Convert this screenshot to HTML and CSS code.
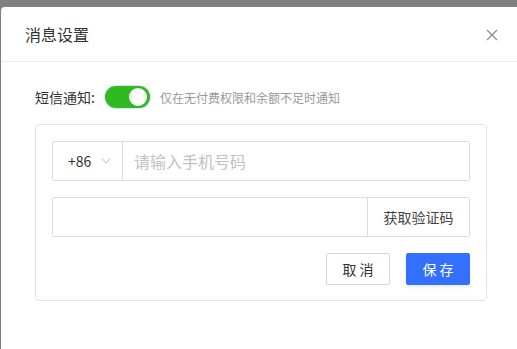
FILE: index.html
```html
<!DOCTYPE html>
<html lang="zh-CN">
<head>
<meta charset="UTF-8" />
<meta name="viewport" content="width=device-width, initial-scale=1" />
<title>消息设置</title>
<link rel="stylesheet" href="styles.css">
</head>
<body>

<div class="modal">
  <div class="modal-header">
    <h2>消息设置</h2>
    <span class="close">
      <svg width="12" height="12" viewBox="0 0 12 12"><path d="M1 1 L11 11 M11 1 L1 11" stroke="#8c8c8c" stroke-width="1.3" fill="none"/></svg>
    </span>
  </div>

  <div class="modal-body">
    <div class="notify-row">
      <span class="label">短信通知:</span>
      <span class="switch on"><span class="knob"></span></span>
      <span class="hint">仅在无付费权限和余额不足时通知</span>
    </div>

    <div class="card">
      <div class="field">
        <div class="prefix">
          <span>+86</span>
          <svg width="10" height="6" viewBox="0 0 10 6"><path d="M1 0.5 L5 5 L9 0.5" stroke="#bfbfbf" stroke-width="1" fill="none"/></svg>
        </div>
        <input type="text" class="phone" placeholder="请输入手机号码" />
      </div>

      <div class="field">
        <input type="text" class="code" />
        <button class="get-code">获取验证码</button>
      </div>

      <div class="actions">
        <button class="btn">取 消</button>
        <button class="btn primary">保 存</button>
      </div>
    </div>
  </div>
</div>

</body>
</html>
```

FILE: styles.css
```css
body {
  margin: 0;
  background: #808080;
  font-family: "Noto Sans CJK SC", "Noto Sans", sans-serif;
  color: #333;
  overflow: hidden;
  height: 349px;
}
.modal {
  margin: 7px 0 0 1px;
  width: 540px;
  height: 342px;
  background: #fff;
  border-radius: 4px 0 0 0;
}
.modal-header {
  height: 54px;
  display: flex;
  align-items: center;
  justify-content: space-between;
  padding: 0 43px 0 24px;
  border-bottom: 1px solid #ebebeb;
}
.modal-header h2 {
  margin: 0;
  font-size: 16px;
  font-weight: 400;
  color: #333;
}
.close {
  display: flex;
  margin-top: 2px;
}
.modal-body {
  padding: 24px 0 0 34px;
}
.notify-row {
  display: flex;
  align-items: center;
  height: 22px;
}
.label {
  font-size: 14px;
  color: #333;
  margin-right: 10px;
}
.switch {
  width: 45px;
  height: 22px;
  border-radius: 11px;
  background: #2fbb1f;
  box-shadow: 0 0 0 1px rgba(110, 140, 255, 0.25);
  position: relative;
  margin-right: 10px;
}
.knob {
  position: absolute;
  top: 2px;
  right: 3px;
  width: 18px;
  height: 18px;
  border-radius: 50%;
  background: #fff;
}
.hint {
  font-size: 12px;
  color: #999;
}
.card {
  margin-top: 16px;
  width: 418px;
  border: 1px solid #e2e2e2;
  border-radius: 4px;
  padding: 16px 16px 15px 16px;
}
.field {
  display: flex;
  height: 38px;
  border: 1px solid #dcdcdc;
  border-radius: 2px;
  margin-bottom: 16px;
}
.prefix {
  width: 70px;
  display: flex;
  align-items: center;
  padding-left: 15px;
  gap: 10px;
  box-sizing: border-box;
  border-right: 1px solid #dcdcdc;
  font-size: 14px;
  color: #333;
}
input {
  flex: 1;
  border: none;
  outline: none;
  font-family: inherit;
  padding: 0 0 0 11px;
  min-width: 0;
}
.phone {
  font-size: 16px;
}
.phone::placeholder {
  color: #c2c2c2;
}
.get-code {
  width: 102px;
  border: none;
  border-left: 1px solid #dcdcdc;
  background: #fff;
  font-family: inherit;
  font-size: 14px;
  color: #444;
  padding: 0;
}
.actions {
  display: flex;
  justify-content: flex-end;
  gap: 16px;
}
.btn {
  width: 64px;
  height: 32px;
  border: 1px solid #d6d6d6;
  border-radius: 2px;
  background: #fff;
  font-family: inherit;
  font-size: 14px;
  color: #333;
  padding: 0;
}
.btn.primary {
  background: #3370ff;
  border-color: #3370ff;
  color: #fff;
  box-shadow: 0 2px 3px rgba(51, 112, 255, 0.12);
}
```
